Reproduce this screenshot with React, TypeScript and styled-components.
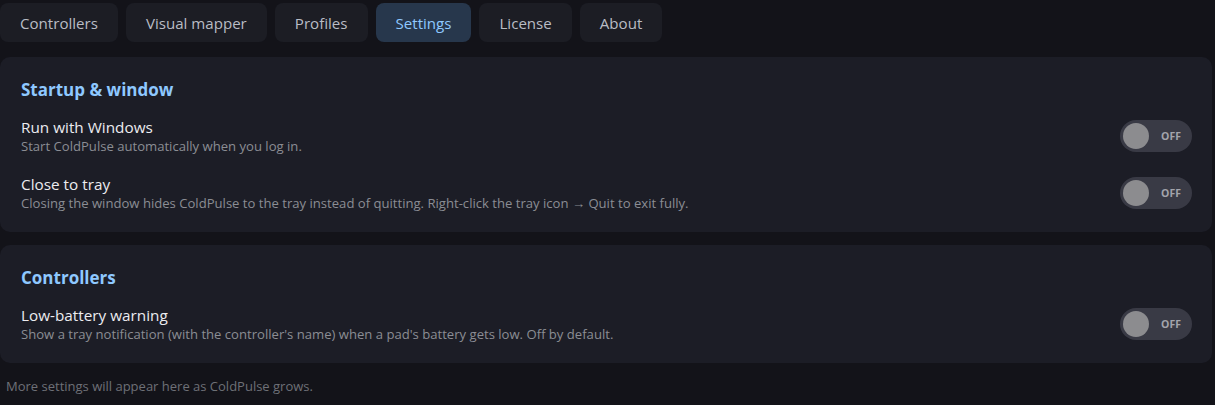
import React, { useState } from "react";
import styled, { createGlobalStyle } from "styled-components";

const Global = createGlobalStyle`
  html, body {
    margin: 0;
    padding: 0;
    background: #131319;
  }
  body {
    font-family: "Open Sans", "Noto Sans", sans-serif;
    color: #e6e6ea;
  }
`;

const Page = styled.div`
  width: 1212px;
  padding-top: 3px;
  display: flex;
  flex-direction: column;
`;

const TabBar = styled.nav`
  display: flex;
  gap: 8px;
  margin-bottom: 15px;
`;

const Tab = styled.button<{ $active?: boolean }>`
  height: 39px;
  padding: 0 20px;
  border: none;
  border-radius: 8px;
  font-family: inherit;
  font-size: 15.1px;
  background: ${(p) => (p.$active ? "#27374c" : "#1c1d24")};
  color: ${(p) => (p.$active ? "#8ec8ff" : "#b9bcc4")};
  cursor: pointer;
`;

const Card = styled.section`
  background: #1c1d26;
  border-radius: 10px;
  padding: 21px 20px 20px 21px;
  margin-bottom: 13px;
`;

const CardTitle = styled.h2`
  margin: 0 0 15px;
  font-size: 17px;
  font-weight: 700;
  color: #8ec8ff;
  line-height: 24px;
`;

const Rows = styled.div`
  display: flex;
  flex-direction: column;
  gap: 19px;
`;

const Row = styled.div`
  display: flex;
  align-items: center;
  justify-content: space-between;
`;

const RowText = styled.div`
  display: flex;
  flex-direction: column;
`;

const RowTitle = styled.div`
  font-size: 15.3px;
  line-height: 20px;
  color: #ececf0;
`;

const RowDesc = styled.div`
  font-size: 13.1px;
  line-height: 18px;
  color: #8b8d94;
`;

const Toggle = styled.button<{ $on: boolean }>`
  position: relative;
  width: 72px;
  height: 32px;
  border: none;
  border-radius: 16px;
  background: ${(p) => (p.$on ? "#2f6fb3" : "#393a45")};
  padding: 0;
  cursor: pointer;
  display: flex;
  align-items: center;
  justify-content: flex-end;
  padding-right: 11px;
  font-family: inherit;
  font-size: 10.5px;
  font-weight: 700;
  color: #a3a4ab;
`;

const Knob = styled.span<{ $on: boolean }>`
  position: absolute;
  top: 3px;
  left: ${(p) => (p.$on ? "43px" : "3px")};
  width: 26px;
  height: 26px;
  border-radius: 50%;
  background: #8c8c8f;
`;

const Footer = styled.p`
  margin: 1px 0 0 6px;
  font-size: 13px;
  line-height: 18px;
  color: #6e7077;
`;

const tabs = ["Controllers", "Visual mapper", "Profiles", "Settings", "License", "About"];

function Switch() {
  const [on, setOn] = useState(false);
  return (
    <Toggle $on={on} onClick={() => setOn(!on)}>
      <Knob $on={on} />
      {on ? "ON" : "OFF"}
    </Toggle>
  );
}

function Setting({ title, desc }: { title: string; desc: string }) {
  return (
    <Row>
      <RowText>
        <RowTitle>{title}</RowTitle>
        <RowDesc>{desc}</RowDesc>
      </RowText>
      <Switch />
    </Row>
  );
}

export default function App() {
  return (
    <Page>
      <Global />
      <TabBar>
        {tabs.map((t) => (
          <Tab key={t} $active={t === "Settings"}>
            {t}
          </Tab>
        ))}
      </TabBar>
      <Card>
        <CardTitle>Startup &amp; window</CardTitle>
        <Rows>
          <Setting title="Run with Windows" desc="Start ColdPulse automatically when you log in." />
          <Setting
            title="Close to tray"
            desc="Closing the window hides ColdPulse to the tray instead of quitting. Right-click the tray icon → Quit to exit fully."
          />
        </Rows>
      </Card>
      <Card>
        <CardTitle>Controllers</CardTitle>
        <Rows>
          <Setting
            title="Low-battery warning"
            desc="Show a tray notification (with the controller's name) when a pad's battery gets low. Off by default."
          />
        </Rows>
      </Card>
      <Footer>More settings will appear here as ColdPulse grows.</Footer>
    </Page>
  );
}
